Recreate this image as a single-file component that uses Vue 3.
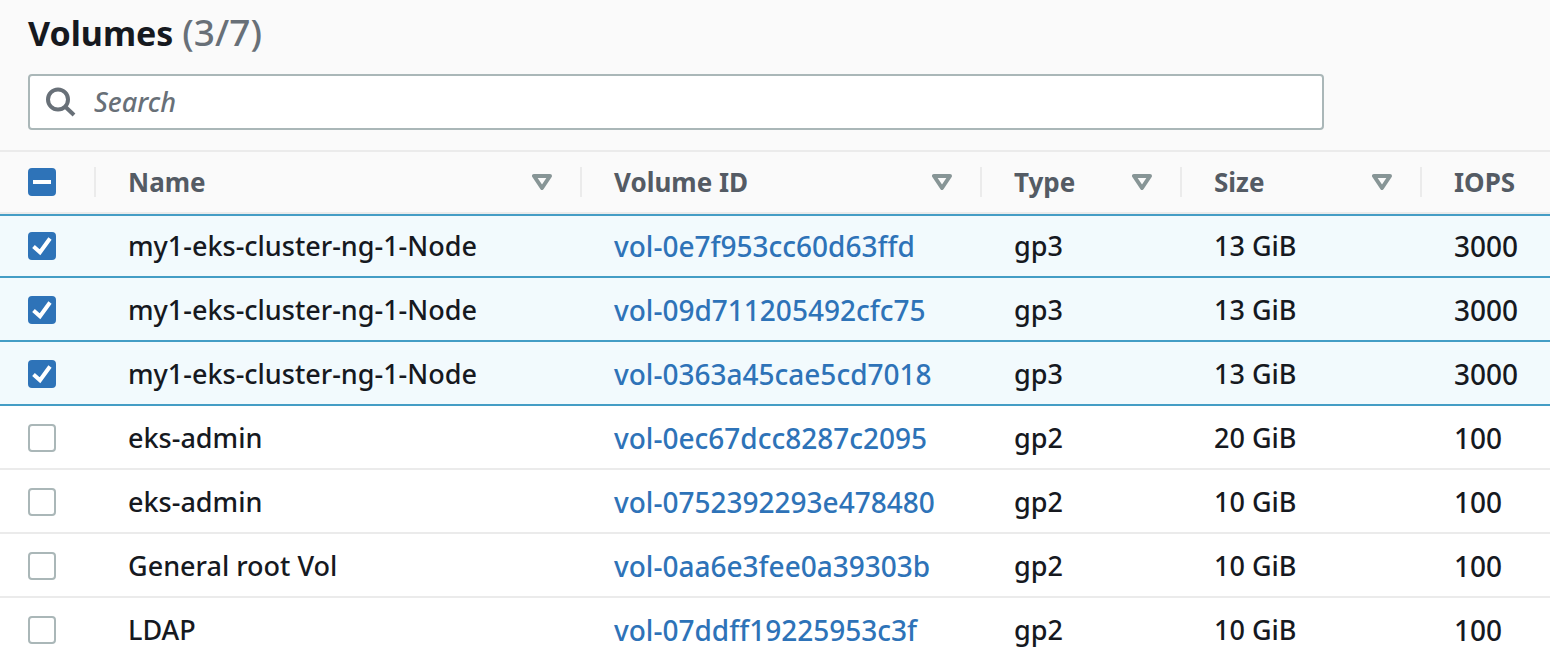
<script setup>
import { computed, reactive, ref } from 'vue'

const query = ref('')

const columns = [
  { key: 'name', label: 'Name', sortable: true },
  { key: 'id', label: 'Volume ID', sortable: true },
  { key: 'type', label: 'Type', sortable: true },
  { key: 'size', label: 'Size', sortable: true },
  { key: 'iops', label: 'IOPS', sortable: false },
]

const volumes = reactive([
  { name: 'my1-eks-cluster-ng-1-Node', id: 'vol-0e7f953cc60d63ffd', type: 'gp3', size: '13 GiB', iops: '3000', selected: true },
  { name: 'my1-eks-cluster-ng-1-Node', id: 'vol-09d711205492cfc75', type: 'gp3', size: '13 GiB', iops: '3000', selected: true },
  { name: 'my1-eks-cluster-ng-1-Node', id: 'vol-0363a45cae5cd7018', type: 'gp3', size: '13 GiB', iops: '3000', selected: true },
  { name: 'eks-admin', id: 'vol-0ec67dcc8287c2095', type: 'gp2', size: '20 GiB', iops: '100', selected: false },
  { name: 'eks-admin', id: 'vol-0752392293e478480', type: 'gp2', size: '10 GiB', iops: '100', selected: false },
  { name: 'General root Vol', id: 'vol-0aa6e3fee0a39303b', type: 'gp2', size: '10 GiB', iops: '100', selected: false },
  { name: 'LDAP', id: 'vol-07ddff19225953c3f', type: 'gp2', size: '10 GiB', iops: '100', selected: false },
])

const visible = computed(() =>
  volumes.filter((v) => (v.name + v.id).toLowerCase().includes(query.value.toLowerCase()))
)
const selectedCount = computed(() => volumes.filter((v) => v.selected).length)
const allSelected = computed(() => selectedCount.value === volumes.length)
const someSelected = computed(() => selectedCount.value > 0 && !allSelected.value)

function toggleAll(event) {
  volumes.forEach((v) => { v.selected = event.target.checked })
}
</script>

<template>
  <main class="panel">
    <header class="top">
      <h1 class="title">Volumes <span class="count">({{ selectedCount }}/{{ volumes.length }})</span></h1>
      <label class="search">
        <svg class="search-icon" viewBox="0 0 30 30" aria-hidden="true">
          <circle cx="12" cy="12.5" r="10" />
          <path d="M19 19.5 L28 28" />
        </svg>
        <input v-model="query" class="search-input" type="text" placeholder="Search" aria-label="Search volumes" />
      </label>
    </header>

    <table class="table">
      <colgroup>
        <col class="col-check" />
        <col v-for="c in columns" :key="c.key" :class="'col-' + c.key" />
      </colgroup>
      <thead>
        <tr>
          <th class="check-cell" scope="col">
            <label class="check">
              <input type="checkbox" aria-label="Select all volumes" :checked="allSelected" :indeterminate="someSelected" @change="toggleAll" />
              <svg v-if="someSelected" viewBox="0 0 28 28" aria-hidden="true"><path d="M5 14H23" /></svg>
              <svg v-else-if="allSelected" viewBox="0 0 28 28" aria-hidden="true"><path d="M5.5 14.5L12 20.2L22 6.5" /></svg>
            </label>
          </th>
          <th v-for="c in columns" :key="c.key" scope="col">
            <div class="head">
              <span>{{ c.label }}</span>
              <button v-if="c.sortable" class="sort" type="button" :aria-label="'Sort by ' + c.label">
                <svg viewBox="0 0 20 16" aria-hidden="true"><path d="M2 2H18L10 14Z" /></svg>
              </button>
            </div>
          </th>
        </tr>
      </thead>
      <tbody>
        <tr v-for="v in visible" :key="v.id" :class="{ selected: v.selected }">
          <td class="check-cell">
            <label class="check">
              <input v-model="v.selected" type="checkbox" :aria-label="'Select ' + v.id" />
              <svg v-if="v.selected" viewBox="0 0 28 28" aria-hidden="true"><path d="M5.5 14.5L12 20.2L22 6.5" /></svg>
            </label>
          </td>
          <td>{{ v.name }}</td>
          <td class="digits"><a href="#">{{ v.id }}</a></td>
          <td>{{ v.type }}</td>
          <td>{{ v.size }}</td>
          <td class="digits">{{ v.iops }}</td>
        </tr>
      </tbody>
    </table>
  </main>
</template>

<style>
body {
  background: #fff;
}
</style>

<style scoped>
.panel {
  font-family: "Noto Sans", "Open Sans", sans-serif;
  font-size: 27px;
  font-weight: 500;
  line-height: 40px;
  color: #16191f;
  overflow-x: hidden;
}

.top {
  padding: 9px 226px 20px 28px;
  background: #fafafa;
}

.title {
  margin: 0 0 17px;
  font-size: 34px;
  line-height: 48px;
  font-weight: 700;
}

.count {
  font-size: 37px;
  line-height: 40px;
  font-weight: 500;
  color: #687078;
}

.search {
  display: flex;
  align-items: center;
  gap: 18px;
  box-sizing: border-box;
  height: 56px;
  padding: 0 16px;
  border: 2px solid #aab7b8;
  border-radius: 4px;
  background: #fff;
}

.search-icon {
  flex: none;
  width: 30px;
  height: 30px;
  fill: none;
  stroke: #687078;
  stroke-width: 4;
}

.search-input {
  flex: 1;
  min-width: 0;
  height: 40px;
  padding: 0;
  border: 0;
  outline: 0;
  background: transparent;
  font: inherit;
  color: #16191f;
}

.search-input::placeholder {
  font-style: italic;
  color: #687078;
  opacity: 1;
}

.table {
  width: 100%;
  table-layout: fixed;
  border-collapse: separate;
  border-spacing: 0;
}

.col-check { width: 96px; }
.col-name { width: 486px; }
.col-id { width: 400px; }
.col-type { width: 200px; }
.col-size { width: 240px; }

th,
td {
  box-sizing: border-box;
  height: 64px;
  padding: 0 0 0 32px;
  text-align: left;
  vertical-align: middle;
  white-space: nowrap;
}

th {
  border-top: 2px solid #ebebeb;
  border-bottom: 2px solid #ebebeb;
  background: #fafafa;
  color: #545b64;
  font-size: 26px;
  font-weight: 700;
}

td {
  border-top: 2px solid transparent;
  border-bottom: 2px solid #ebebeb;
}

.digits {
  font-size: 28px;
}

tbody tr:last-child td {
  border-bottom-color: transparent;
}

.selected td {
  border-bottom-color: #449dc5;
  background: #f2fafd;
}

.selected:first-child td {
  border-top-color: #449dc5;
}

th.check-cell,
td.check-cell {
  padding-left: 28px;
}

th.check-cell {
  background: linear-gradient(#ebebeb, #ebebeb) right center / 2px 30px no-repeat #fafafa;
}

.head {
  display: flex;
  align-items: center;
  justify-content: space-between;
  height: 30px;
  padding-right: 28px;
  border-right: 2px solid #ebebeb;
}

th:last-child .head {
  border-right: 0;
  padding-right: 0;
}

.sort {
  display: flex;
  padding: 0;
  border: 0;
  background: none;
  cursor: pointer;
}

.sort svg {
  width: 20px;
  height: 16px;
  fill: none;
  stroke: #879596;
  stroke-width: 4;
  stroke-linejoin: round;
}

.check {
  display: grid;
  width: 28px;
  height: 28px;
}

.check > * {
  grid-area: 1 / 1;
}

.check input {
  appearance: none;
  box-sizing: border-box;
  width: 28px;
  height: 28px;
  margin: 0;
  border: 2px solid #aab7b8;
  border-radius: 4px;
  background: #fff;
}

.check input:checked,
.check input:indeterminate {
  border-color: #2e73b8;
  background: #2e73b8;
}

.check svg {
  width: 28px;
  height: 28px;
  fill: none;
  stroke: #fff;
  stroke-width: 4;
  pointer-events: none;
}

a {
  color: #2e73b8;
  text-decoration: none;
}
</style>
